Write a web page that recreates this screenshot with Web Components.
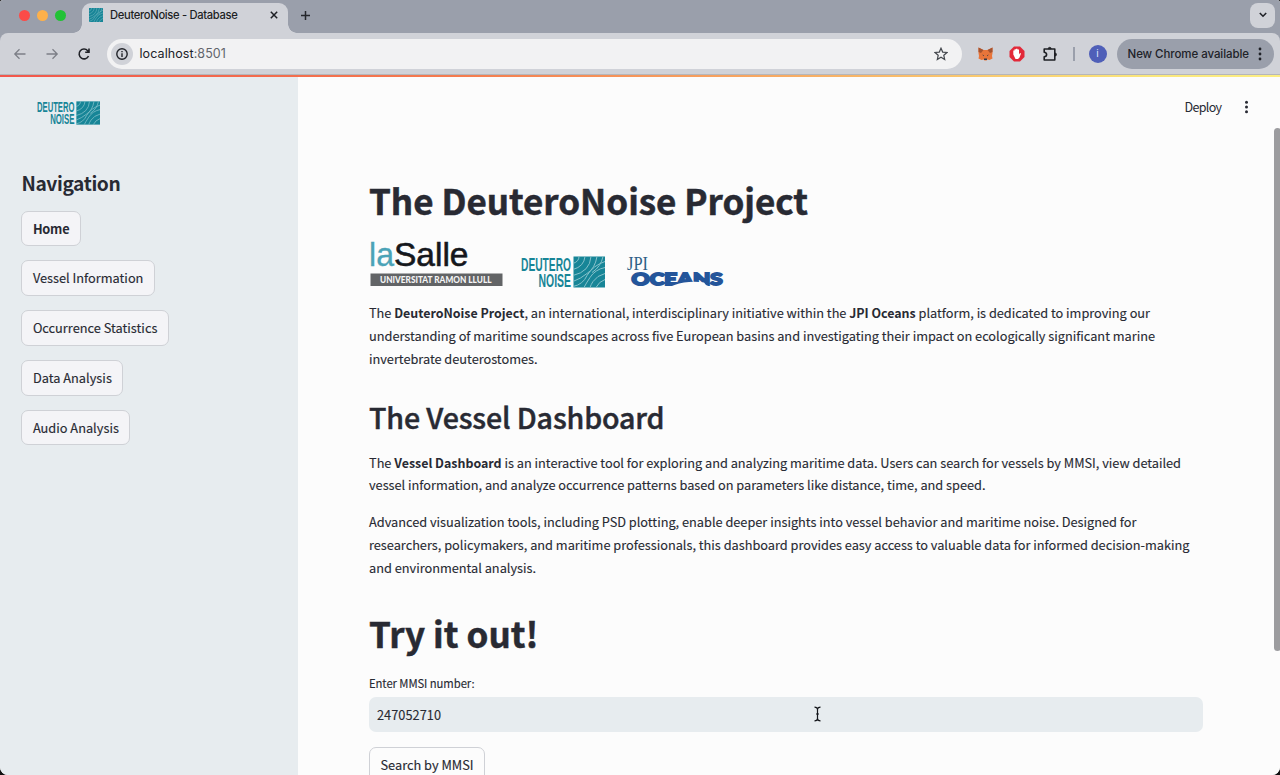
<!DOCTYPE html>
<html lang="en">
<head>
<meta charset="utf-8">
<title>DeuteroNoise - Database</title>
<style>
html,body{margin:0;height:100%;overflow:hidden;background:#111}
body{font-family:"Noto Sans CJK SC","Noto Sans",sans-serif;color:#282a33}
</style>
</head>
<body>
<browser-window>
  <browser-tabs slot="tabs"></browser-tabs>
  <browser-toolbar slot="toolbar"></browser-toolbar>
  <side-bar slot="page">
    <nav-button w="36.500" bold>Home</nav-button>
    <nav-button w="110.500">Vessel Information</nav-button>
    <nav-button w="124.500">Occurrence Statistics</nav-button>
    <nav-button w="79">Data Analysis</nav-button>
    <nav-button w="86">Audio Analysis</nav-button>
  </side-bar>
  <main-page slot="page"></main-page>
</browser-window>
<script>
class Base extends HTMLElement{
  constructor(){super();this.attachShadow({mode:"open"});}
  connectedCallback(){this.shadowRoot.innerHTML=this.view();}
}
const def=(n,c)=>customElements.define(n,c);

/* One line of text spread over an exact width by letter-spacing. */
class FitText extends HTMLElement{
  constructor(){super();this.attachShadow({mode:"open"}).innerHTML=
    `<style>:host{display:block;white-space:nowrap}span{display:inline-block}</style><span><slot></slot></span>`;}
  connectedCallback(){requestAnimationFrame(()=>this.fit());this.fit();}
  fit(){
    const s=this.shadowRoot.querySelector("span"),w=+this.getAttribute("w"),n=this.textContent.length;
    if(!w||!n)return;
    s.style.letterSpacing="0";
    const d=(w-s.getBoundingClientRect().width)/n;
    s.style.letterSpacing=d.toFixed(4)+"px";
  }
}

/* Two families of concentric rings meeting on the diagonal. */
const waves=`<g fill="none" stroke="#86c2cb" stroke-width="1">
<path d="M6 0Q6 5 0 7M12 0Q11 10 0 13M18 0Q17 15 0 19M24 0Q22 12 14 17Q8 22 0 25M30 0Q28 10 19 16"/>
<path d="M32 5Q20 9 14 19Q10 28 0 30M32 11Q22 13 17 21Q13 27 11 31M32 17Q24 19 20 25Q18 28 17 31M32 23Q26 25 23 31"/></g>`;

class WaveMark extends Base{view(){return `<style>:host{display:block}svg{display:block;width:100%;height:100%}</style>
<svg viewBox="0 0 32 31" preserveAspectRatio="none"><rect width="32" height="31" fill="#178597"/>${waves}</svg>`}}

class DeuteroLogo extends Base{view(){return `<style>:host{display:block}svg{display:block;width:100%;height:100%;overflow:visible}</style>
<svg viewBox="0 0 84 32"><g fill="#178597" font-family="Liberation Sans" font-weight="700">
<text x="0" y="14.600" font-size="18.600" textLength="50" lengthAdjust="spacingAndGlyphs">DEUTERO</text>
<text x="17.500" y="30.800" font-size="18.600" textLength="32.500" lengthAdjust="spacingAndGlyphs">NOISE</text></g>
<rect x="52.500" y=".5" width="31.500" height="31" fill="#178597"/>
<g transform="translate(52 .5)">${waves}</g></svg>`}}

class LasalleLogo extends Base{view(){return `<style>:host{display:block}svg{display:block;overflow:visible}</style>
<svg width="134" height="48"><g font-family="Liberation Sans" font-size="34">
<text x="0" y="26" fill="#4ba3b7" stroke="#4ba3b7" stroke-width=".3" textLength="25" lengthAdjust="spacingAndGlyphs">la</text>
<text x="25" y="26" fill="#15171c" stroke="#15171c" stroke-width=".6" textLength="74.500" lengthAdjust="spacingAndGlyphs">Salle</text></g>
<rect x="1.500" y="33.500" width="132" height="12.500" fill="#626466"/>
<text x="11" y="42.800" font-family="Lato" font-weight="900" font-size="8.500" fill="#f5f5f5" textLength="111.500" lengthAdjust="spacingAndGlyphs">UNIVERSITAT RAMON LLULL</text></svg>`}}

class OceansLogo extends Base{view(){return `<style>:host{display:block}svg{display:block;overflow:visible}</style>
<svg width="98" height="32">
<text x="1" y="13.500" font-family="Liberation Serif" font-size="18" fill="#2d5f86" textLength="21" lengthAdjust="spacingAndGlyphs">JPI</text>
<text x="5.500" y="29.300" font-family="Lato" font-weight="900" font-size="17" fill="#24559a" stroke="#24559a" stroke-width="1.800" textLength="91" lengthAdjust="spacingAndGlyphs">OCEANS</text>
<path d="M40 33Q48 28 58 26.500Q68 25 78 26.500L80 29Q88 34 99 31V34H40Z" fill="#fcfcfc"/></svg>`}}

class BrowserWindow extends Base{view(){return `<style>
:host{display:flex;flex-direction:column;width:1280px;height:775px;border-radius:3px 3px 8px 8px;overflow:hidden;background:#fcfcfc}
.line{height:1px;background:#b5b6ba;flex:none}.g{height:2px;flex:none;background:linear-gradient(90deg,#f2574c 0,#f47a4e 35%,#f8bb6a 70%,#fae77b 90%,#fcee83)}
.page{flex:1;display:flex;min-height:0}</style>
<slot name="tabs"></slot><slot name="toolbar"></slot><div class="line"></div><div class="g"></div><div class="page"><slot name="page"></slot></div>`}}

class BrowserTabs extends Base{view(){return `<style>
:host{display:flex;height:33px;background:#9a9fab;flex:none;font-family:Inter,sans-serif;color:#1d1f24}
.l{display:flex;gap:7px;padding:10px 0 0 18.500px;width:82px;box-sizing:border-box;flex:none}.l i{width:11px;height:11px;border-radius:50%;flex:none}
.tab{position:relative;width:206px;height:30px;margin-top:3px;background:#d0d2d8;border-radius:9px 9px 0 0;display:flex;align-items:center;box-sizing:border-box;padding:0 0 6px 7px;flex:none}
.tab:before,.tab:after{content:"";position:absolute;bottom:0;width:9px;height:9px}
.tab:before{left:-9px;background:radial-gradient(circle at 0 0,transparent 8.500px,#d0d2d8 9px)}
.tab:after{right:-9px;background:radial-gradient(circle at 100% 0,transparent 8.500px,#d0d2d8 9px)}
wave-mark{width:14px;height:14px}fit-text{font-size:11.200px;font-weight:450;margin-left:7px;width:158.500px;line-height:14px;padding-bottom:1px}
.sp{flex:1}.chev{width:25px;height:25px;margin:2.500px 5px 0 0;border-radius:8px;background:#d0d2d8;display:grid;place-items:center}
.plus{margin:10px 0 0 12px}svg{display:block}</style>
<div class="l"><i style="background:#fc4b48"></i><i style="background:#fdb04a"></i><i style="background:#22c236"></i></div>
<div class="tab"><wave-mark></wave-mark><fit-text w="127.500">DeuteroNoise - Database</fit-text>
<svg width="10" height="10" stroke="#1d1f24" stroke-width="1.500"><path d="M1.800 1.800l6.400 6.400M8.200 1.800l-6.400 6.400"/></svg></div>
<svg class="plus" width="11" height="11" stroke="#25272c" stroke-width="1.500"><path d="M5.500 1v9M1 5.500h9"/></svg>
<div class="sp"></div><div class="chev"><svg width="10" height="8" fill="none" stroke="#202228" stroke-width="1.600"><path d="M1.800 2l3.200 3.200L8.200 2"/></svg></div>`}}

class BrowserToolbar extends Base{view(){return `<style>
:host{display:flex;height:41px;background:#9a9fab;flex:none;font-family:Inter,sans-serif;color:#202228}
.bar{display:flex;align-items:center;width:1280px;border-radius:8px 8px 0 0;background:#d0d2d8;padding:0 0 0 12.500px;box-sizing:border-box}
svg{display:block;flex:none}.url{display:flex;align-items:center;height:30px;width:855.500px;border-radius:15px;background:#f2f2f3;box-sizing:border-box;padding:0 14.500px 0 4px;margin-left:16px}
.info{width:22px;height:22px;border-radius:50%;background:#d0d2d8;display:grid;place-items:center}
fit-text{font-size:12.500px;line-height:16px}.u{margin-left:7px;flex:1}.u b{font-weight:400;color:#62656b}
.sep{width:1.500px;height:14px;background:#9a9fab;margin-left:14.500px}
.av{width:18px;height:18px;border-radius:50%;background:#4f5fb8;color:#dfe3fa;font:10px/18px Roboto;text-align:center;margin-left:14px}
.chip{display:flex;align-items:center;width:157px;height:30px;border-radius:15px;background:#9a9fab;margin-left:10.500px;padding-left:10.500px;box-sizing:border-box}
.chip fit-text{font-size:11.500px;width:130.500px;font-weight:450}</style>
<div class="bar">
<svg width="14" height="14" fill="none" stroke="#7c7f87" stroke-width="1.300"><path d="M12.500 7H2M6.500 2.300L1.800 7l4.700 4.700"/></svg>
<svg style="margin-left:18px" width="14" height="14" fill="none" stroke="#7c7f87" stroke-width="1.300"><path d="M1.500 7H12M7.500 2.300L12.200 7l-4.700 4.700"/></svg>
<svg style="margin-left:18px" width="14" height="14" fill="none" stroke="#202228" stroke-width="1.600"><path d="M11.500 9A4.900 4.900 0 1 1 10.700 3.700L11.800 5M12 1.500V5.300H8.200"/></svg>
<div class="url"><div class="info"><svg width="12" height="12" fill="none" stroke="#202228" stroke-width="1.400"><circle cx="6" cy="6" r="5.200"/><path d="M6 5.300v3.700M6 2.900v1.300"/></svg></div>
<fit-text class="u" w="86.500">localhost<b>:8501</b></fit-text>
<svg width="14" height="14" fill="none" stroke="#44474d" stroke-width="1.200"><path d="M7 1.200l1.700 3.900 4.300.4-3.200 2.800.9 4.200L7 10.300l-3.700 2.200.9-4.200L1 5.500l4.300-.4z"/></svg></div>
<svg style="margin-left:15.500px" width="15" height="14" viewBox="0 0 15 14"><path d="M.5.500L5.500 3h4L14.500.500V6l-.5 3 .5 2.500-3 1.500-2-.5-1 1h-2l-1-1-2 .5-3-1.500L1 9 .5 6z" fill="#e8753a"/><path d="M.5.500L5.500 3 3 6 .5 5zM14.500.500L9.500 3 12 6l2.500-1z" fill="#a5532f"/><path d="M4 7.500l2 .7v1zM11 7.500l-2 .7v1zM6 11.500h3V13H6z" fill="#363945"/></svg>
<svg style="margin-left:16.500px" width="16" height="16"><path d="M5 .5h6L15.500 5v6L11 15.500H5L.5 11V5z" fill="#e22939"/><path d="M4.300 8.500V4.500h1.200V3.300H7V2.800h1.500v.7H10v5l1-1.500 1 .5-1.500 4L9 13H6.500z" fill="#fff"/></svg>
<svg style="margin-left:16.500px" width="17" height="16" fill="none" stroke="#1e2025" stroke-width="1.600" stroke-linejoin="round"><path d="M2.200 3H12.800V14H2.200V10.800Q4.600 10.500 4.600 8.500T2.200 6.200Z"/><path d="M6.200 2.800a1.500 1.500 0 0 1 3 0zM13 7a1.500 1.500 0 0 1 0 3z" fill="#1e2025" stroke-width=".8"/></svg>
<div class="sep"></div><div class="av">i</div>
<div class="chip"><fit-text w="121.500">New Chrome available</fit-text><svg width="4" height="14" fill="#202228"><circle cx="2" cy="2" r="1.400"/><circle cx="2" cy="7" r="1.400"/><circle cx="2" cy="12" r="1.400"/></svg></div>
</div>`}}

class SideBar extends Base{view(){return `<style>
:host{display:flex;flex-direction:column;width:297.500px;background:#e7ecef;flex:none;box-sizing:border-box;padding:24px 0 0 21.400px}
deutero-logo{width:63px;height:24px;margin-left:15.600px}
.h{font-weight:700;font-size:19.200px;line-height:26px;margin-top:44.500px;height:26px}
nav{display:flex;flex-direction:column;align-items:flex-start;gap:14px;margin-top:15.200px}</style>
<deutero-logo></deutero-logo><fit-text class="h" w="99">Navigation</fit-text><nav><slot></slot></nav>`}}

class NavButton extends Base{view(){const b=this.hasAttribute("bold");return `<style>
:host{display:block;box-sizing:border-box;height:35.750px;border:1px solid #cfd1d6;border-radius:7px;background:var(--btn,#f4f4f7);padding:0 10.500px;font-size:12.750px;line-height:33px}
fit-text{-webkit-text-stroke:${b?0:.15}px;font-weight:${b?700:400};width:${this.getAttribute("w")}px}</style><fit-text w="${this.getAttribute("w")}">${this.textContent}</fit-text>`}}

class MainPage extends Base{view(){return `<style>
:host{display:flex;flex-direction:column;position:relative;flex:1;background:#fcfcfc;box-sizing:border-box;padding:0 77px 0 71.500px}
header{display:flex;justify-content:flex-end;align-items:center;height:59px;margin-right:-46px;font-size:12.500px;gap:22.500px;flex:none}header fit-text{width:37px}
h1,h2,p{margin:0;flex:none}h1{font-size:35px;line-height:47px;height:47px;font-weight:700;-webkit-text-stroke:.5px}
h2{font-size:28.600px;line-height:38px;height:38px;margin-top:28px;font-weight:500;-webkit-text-stroke:.45px}
p{font-size:12.750px;line-height:22.700px;-webkit-text-stroke:.12px}b{font-weight:700;-webkit-text-stroke:0;font-size:12.450px}
.logos{display:flex;height:48px;margin-top:17px;gap:18px;align-items:flex-end;flex:none}
.lab{font-size:11.300px;line-height:18px;margin-top:17.200px;-webkit-text-stroke:.12px}
.in{height:35px;border-radius:7px;background:#e7ecef;margin-top:5.500px;display:flex;align-items:center;font-size:12.750px;padding-left:8px;position:relative;flex:none;-webkit-text-stroke:.12px}
.cur{position:absolute;left:444px;top:9px}
nav-button{--btn:#fcfcfc;margin-top:14.600px;align-self:flex-start;flex:none}
.sb{position:absolute;right:-1px;top:51px;width:7px;height:523px;border-radius:4px;background:#9c9c9f}</style>
<header><fit-text w="37">Deploy</fit-text><svg width="5" height="14" fill="#282a33"><circle cx="2.500" cy="2.300" r="1.500"/><circle cx="2.500" cy="7" r="1.500"/><circle cx="2.500" cy="11.700" r="1.500"/></svg></header>
<h1 style="margin-top:39.500px"><fit-text w="439">The DeuteroNoise Project</fit-text></h1>
<div class="logos"><lasalle-logo></lasalle-logo><deutero-logo style="width:84px;height:32px"></deutero-logo><oceans-logo style="margin-left:3px"></oceans-logo></div>
<p style="margin-top:14.700px"><fit-text w="781">The <b>DeuteroNoise Project</b>, an international, interdisciplinary initiative within the <b>JPI Oceans</b> platform, is dedicated to improving our</fit-text><fit-text w="786">understanding of maritime soundscapes across five European basins and investigating their impact on ecologically significant marine</fit-text><fit-text w="168.500">invertebrate deuterostomes.</fit-text></p>
<h2><fit-text w="295.500">The Vessel Dashboard</fit-text></h2>
<p style="margin-top:15.400px"><fit-text w="812">The <b>Vessel Dashboard</b> is an interactive tool for exploring and analyzing maritime data. Users can search for vessels by MMSI, view detailed</fit-text><fit-text w="616.500">vessel information, and analyze occurrence patterns based on parameters like distance, time, and speed.</fit-text></p>
<p style="margin-top:14px"><fit-text w="767.500">Advanced visualization tools, including PSD plotting, enable deeper insights into vessel behavior and maritime noise. Designed for</fit-text><fit-text w="820.500">researchers, policymakers, and maritime professionals, this dashboard provides easy access to valuable data for informed decision-making</fit-text><fit-text w="167">and environmental analysis.</fit-text></p>
<h1 style="margin-top:30.200px"><fit-text w="169.500">Try it out!</fit-text></h1>
<fit-text class="lab" w="105.500">Enter MMSI number:</fit-text>
<div class="in"><fit-text w="64">247052710</fit-text><svg class="cur" width="9" height="16" fill="none" stroke="#15171c" stroke-width="1.200"><path d="M1.500 1.200Q4.500 1.200 4.500 3.500V12.500Q4.500 14.800 1.500 14.800M7.500 1.200Q4.500 1.200 4.500 3.500M4.500 12.500Q4.500 14.800 7.500 14.800M3 8h3"/></svg></div>
<nav-button w="93">Search by MMSI</nav-button>
<div class="sb"></div>`}}

def("fit-text",FitText);def("wave-mark",WaveMark);def("deutero-logo",DeuteroLogo);def("lasalle-logo",LasalleLogo);def("oceans-logo",OceansLogo);
def("nav-button",NavButton);def("browser-tabs",BrowserTabs);def("browser-toolbar",BrowserToolbar);def("side-bar",SideBar);def("main-page",MainPage);def("browser-window",BrowserWindow);
</script>
</body>
</html>
